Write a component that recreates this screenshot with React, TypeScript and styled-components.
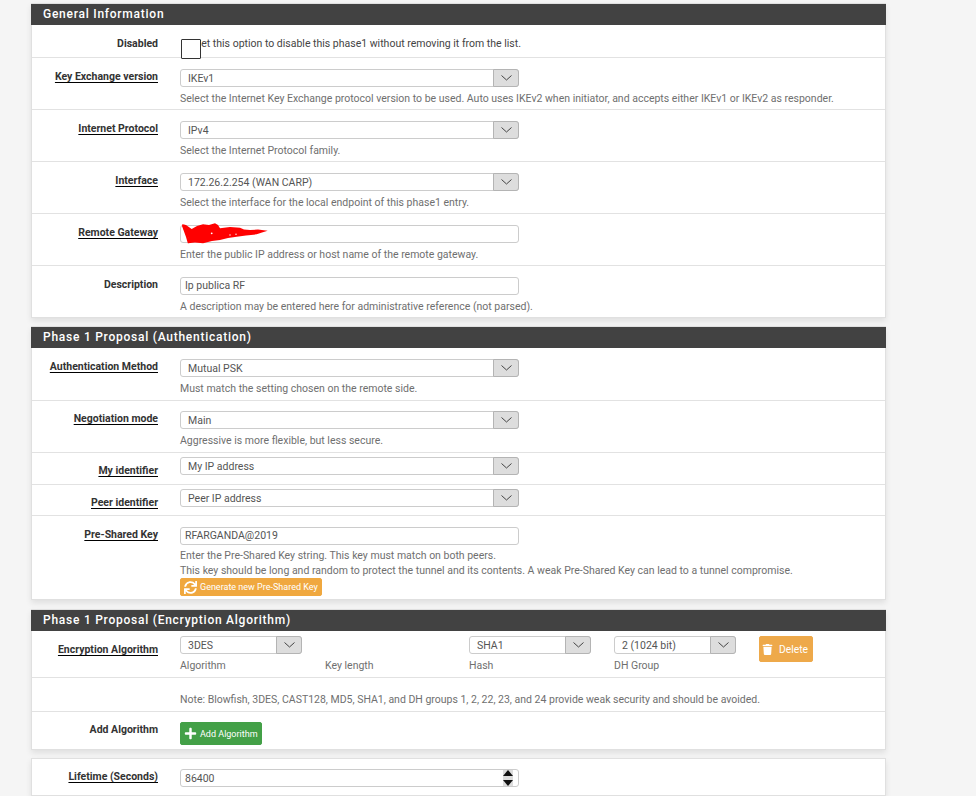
import React from "react";
import styled, { createGlobalStyle } from "styled-components";
import { FaSync, FaPlus, FaTrash } from "react-icons/fa";

const Global = createGlobalStyle`
  html, body { margin: 0; padding: 0; background: #f5f5f5; }
  body { font-family: Roboto, "Liberation Sans", sans-serif; font-size: 10.5px; color: #444; height: 796px; overflow: hidden; }
`;

const Page = styled.div`
  width: 855px;
  margin-left: 31px;
  padding-top: 3px;
  display: flex;
  flex-direction: column;
`;

const Panel = styled.section<{ $gap?: number }>`
  background: #fff;
  border: 1px solid #e0e0e0;
  box-shadow: 0 3px 6px rgba(0, 0, 0, 0.09);
  margin-bottom: ${(p) => p.$gap ?? 8}px;
`;

const Header = styled.h2`
  margin: 0 -1px;
  height: 21px;
  line-height: 20px;
  background: #424242;
  color: #fff;
  font-size: 12px;
  font-weight: 500;
  letter-spacing: 0.75px;
  padding-left: 12px;
`;

const Row = styled.div<{ $h: number; $pt?: number; $last?: boolean }>`
  height: ${(p) => p.$h}px;
  box-sizing: border-box;
  display: grid;
  grid-template-columns: 126px 1fr;
  column-gap: 22px;
  padding-top: ${(p) => p.$pt ?? 11}px;
  border-bottom: ${(p) => (p.$last ? "none" : "1px solid #e2e2e2")};
`;

const Label = styled.div<{ $underlined?: boolean; $mt?: number }>`
  text-align: right;
  font-size: 10.5px;
  font-weight: 700;
  color: #333;
  line-height: 14px;
  margin-top: ${(p) => p.$mt ?? 1}px;
  span {
    text-decoration: ${(p) => (p.$underlined ? "underline" : "none")};
    text-decoration-color: #000;
    text-underline-offset: 2px;
    text-decoration-thickness: 1px;
  }
`;

const Value = styled.div`
  min-width: 0;
  position: relative;
`;

const Help = styled.div<{ $mt?: number }>`
  font-size: 10.5px;
  line-height: 15px;
  color: #6f6f6f;
  margin-top: ${(p) => p.$mt ?? 4}px;
  white-space: nowrap;
`;

const CheckText = styled.div`
  font-size: 10.5px;
  line-height: 15px;
  color: #444;
  padding-left: 15px;
`;

const CheckBox = styled.span`
  position: absolute;
  left: 1px;
  top: 3px;
  width: 18px;
  height: 18px;
  background: #fff;
  border: 1px solid #333;
  border-radius: 1px;
`;

const Control = styled.div<{ $w?: number }>`
  width: ${(p) => p.$w ?? 339}px;
  height: 18px;
  box-sizing: border-box;
  border: 1px solid #ccc;
  border-radius: 3px;
  background: #fff;
  display: flex;
  align-items: center;
  justify-content: space-between;
  font-size: 10.5px;
  color: #555;
  position: relative;
`;

const ControlText = styled.span<{ $pl?: number; $pb?: number }>`
  padding-left: ${(p) => p.$pl ?? 7}px;
  padding-bottom: ${(p) => p.$pb ?? 0}px;
  white-space: nowrap;
`;

const Arrow = styled.span`
  flex: none;
  width: 26px;
  height: 18px;
  margin: -1px;
  box-sizing: border-box;
  background: #ddd;
  border: 1px solid #b4b4b4;
  border-radius: 0 3px 3px 0;
  display: flex;
  align-items: center;
  justify-content: center;
`;

const Spinner = styled.span`
  position: absolute;
  right: 5px;
  top: 0;
  width: 10px;
  height: 16px;
  background: #ddd;
  display: block;
`;

const SpinnerIcon = styled.svg`
  display: block;
`;

const Scribble = styled.svg`
  position: absolute;
  left: 0;
  top: -3px;
  pointer-events: none;
`;

const ActionButton = styled.button<{ $bg: string; $w: number; $h: number; $gap?: number }>`
  width: ${(p) => p.$w}px;
  height: ${(p) => p.$h}px;
  box-sizing: border-box;
  background: ${(p) => p.$bg};
  border: 1px solid ${(p) => p.$bg};
  border-radius: 2px;
  color: #fff;
  padding: 0 0 0 3px;
  display: flex;
  align-items: center;
  gap: ${(p) => p.$gap ?? 2}px;
  font-family: inherit;
  font-size: 9px;
  white-space: nowrap;
  svg { flex: none; }
`;

const AlgoGrid = styled.div`
  display: grid;
  grid-template-columns: 145px 144px 145px 145px auto;
  align-items: start;
`;

const AlgoDelete = styled(ActionButton)`
  font-size: 10.3px;
  gap: 6px;
  padding-left: 2px;
`;

const Chevron = () => (
  <Arrow>
    <svg width="11" height="6" viewBox="0 0 11 6" fill="none">
      <path d="M0.5 0.5L5.5 5L10.5 0.5" stroke="#444" strokeWidth="1" />
    </svg>
  </Arrow>
);

const Select = ({ value, w }: { value: string; w?: number }) => (
  <Control $w={w}>
    <ControlText>{value}</ControlText>
    <Chevron />
  </Control>
);

const Input = ({ value }: { value?: string }) => (
  <Control>
    <ControlText $pl={4} $pb={1}>{value}</ControlText>
  </Control>
);

export default function App() {
  return (
    <Page>
      <Global />
      <Panel>
        <Header>General Information</Header>
        <Row $h={33} $pt={11}>
          <Label><span>Disabled</span></Label>
          <Value>
            <CheckText>Set this option to disable this phase1 without removing it from the list.</CheckText>
            <CheckBox />
          </Value>
        </Row>
        <Row $h={52}>
          <Label $underlined><span>Key Exchange version</span></Label>
          <Value>
            <Select value="IKEv1" />
            <Help>Select the Internet Key Exchange protocol version to be used. Auto uses IKEv2 when initiator, and accepts either IKEv1 or IKEv2 as responder.</Help>
          </Value>
        </Row>
        <Row $h={52}>
          <Label $underlined><span>Internet Protocol</span></Label>
          <Value>
            <Select value="IPv4" />
            <Help>Select the Internet Protocol family.</Help>
          </Value>
        </Row>
        <Row $h={52}>
          <Label $underlined><span>Interface</span></Label>
          <Value>
            <Select value="172.26.2.254 (WAN CARP)" />
            <Help>Select the interface for the local endpoint of this phase1 entry.</Help>
          </Value>
        </Row>
        <Row $h={52}>
          <Label $underlined><span>Remote Gateway</span></Label>
          <Value>
            <Input />
            <Scribble width="90" height="24" viewBox="0 0 90 24">
              <path
                d="M2 2.3L6 3L11.7 7L17 4L23 2.3L29 3L35 1.3L38 3L40 6.3L50 5L60 5.7L64 7.5L70 8L78 7.5L87.7 8.7L82 10.5L76.7 12.3L66 13.5L56.7 14.7L48 16L40 18L32 19L23 21.3L15 20.5L8 21.3L8.5 16L6.7 13L4 8Z"
                fill="#f00"
              />
              <path d="M3 3L7 14L9 21" stroke="#f00" strokeWidth="2.5" fill="none" />
              <circle cx="31.7" cy="11.3" r="0.9" fill="#fff" />
              <circle cx="50" cy="13" r="0.7" fill="#fff" />
              <circle cx="56" cy="12.2" r="0.7" fill="#fff" />
            </Scribble>
            <Help>Enter the public IP address or host name of the remote gateway.</Help>
          </Value>
        </Row>
        <Row $h={51} $last>
          <Label><span>Description</span></Label>
          <Value>
            <Input value="Ip publica RF" />
            <Help>A description may be entered here for administrative reference (not parsed).</Help>
          </Value>
        </Row>
      </Panel>

      <Panel $gap={9}>
        <Header>Phase 1 Proposal (Authentication)</Header>
        <Row $h={53}>
          <Label $underlined><span>Authentication Method</span></Label>
          <Value>
            <Select value="Mutual PSK" />
            <Help>Must match the setting chosen on the remote side.</Help>
          </Value>
        </Row>
        <Row $h={52} $pt={10}>
          <Label $underlined><span>Negotiation mode</span></Label>
          <Value>
            <Select value="Main" />
            <Help>Aggressive is more flexible, but less secure.</Help>
          </Value>
        </Row>
        <Row $h={32} $pt={4}>
          <Label $underlined $mt={7}><span>My identifier</span></Label>
          <Value><Select value="My IP address" /></Value>
        </Row>
        <Row $h={31} $pt={4}>
          <Label $underlined $mt={7}><span>Peer identifier</span></Label>
          <Value><Select value="Peer IP address" /></Value>
        </Row>
        <Row $h={83} $last>
          <Label $underlined><span>Pre-Shared Key</span></Label>
          <Value>
            <Input value="RFARGANDA@2019" />
            <Help $mt={3}>
              Enter the Pre-Shared Key string. This key must match on both peers.
              <br />
              This key should be long and random to protect the tunnel and its contents. A weak Pre-Shared Key can lead to a tunnel compromise.
            </Help>
            <ActionButton $bg="#f0a83f" $w={142} $h={18} $gap={3}>
              <FaSync size={13} />
              Generate new Pre-Shared Key
            </ActionButton>
          </Value>
        </Row>
      </Panel>

      <Panel>
        <Header>Phase 1 Proposal (Encryption Algorithm)</Header>
        <Row $h={47} $pt={5}>
          <Label $underlined $mt={7}><span>Encryption Algorithm</span></Label>
          <AlgoGrid>
            <div>
              <Select value="3DES" w={122} />
              <Help>Algorithm</Help>
            </div>
            <div>
              <Help $mt={22}>Key length</Help>
            </div>
            <div>
              <Select value="SHA1" w={122} />
              <Help>Hash</Help>
            </div>
            <div>
              <Select value="2 (1024 bit)" w={122} />
              <Help>DH Group</Help>
            </div>
            <AlgoDelete $bg="#eea94a" $w={54} $h={26}>
              <FaTrash size={11} />
              Delete
            </AlgoDelete>
          </AlgoGrid>
        </Row>
        <Row $h={34} $pt={14}>
          <span />
          <Help $mt={0}>Note: Blowfish, 3DES, CAST128, MD5, SHA1, and DH groups 1, 2, 22, 23, and 24 provide weak security and should be avoided.</Help>
        </Row>
        <Row $h={37} $pt={10} $last>
          <Label><span>Add Algorithm</span></Label>
          <ActionButton $bg="#43a047" $w={82} $h={23} $gap={3}>
            <FaPlus size={13} />
            Add Algorithm
          </ActionButton>
        </Row>
      </Panel>

      <Panel $gap={0}>
        <Row $h={36} $pt={10} $last>
          <Label $underlined><span>Lifetime (Seconds)</span></Label>
          <Value>
            <Control>
              <ControlText $pl={4}>86400</ControlText>
              <Spinner>
                <SpinnerIcon width="10" height="16" viewBox="0 0 10 16">
                  <path d="M5 0L10 6H0Z" fill="#111" />
                  <path d="M0 10H10L5 16Z" fill="#111" />
                </SpinnerIcon>
              </Spinner>
            </Control>
          </Value>
        </Row>
      </Panel>
    </Page>
  );
}
